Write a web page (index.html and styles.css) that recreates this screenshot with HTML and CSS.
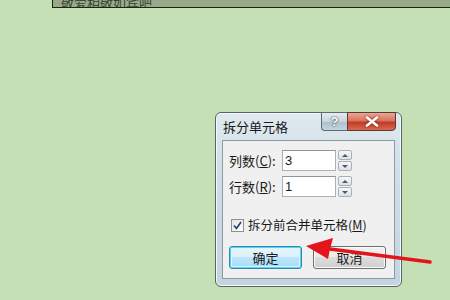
FILE: index.html
```html
<!DOCTYPE html>
<html>
<head>
<meta charset="utf-8">
<link rel="stylesheet" href="styles.css">
</head>
<body>
<div class="doc-strip"><span class="doc-text">敬爱相敬如宾吧</span></div>

<div class="dialog">
  <div class="titlebar">
    <span class="title">拆分单元格</span>
    <div class="caption-btns">
      <div class="cap-help">?</div>
      <div class="cap-close">
        <svg width="14" height="11" viewBox="0 0 14 11"><path d="M2 1.5 L12 9.5 M12 1.5 L2 9.5" stroke="#fff" stroke-width="2.6" stroke-linecap="round"/></svg>
      </div>
    </div>
  </div>
  <div class="client">
    <div class="field">
      <span class="lbl">列数(<u>C</u>):</span>
      <div class="num"><span class="val">3</span></div>
      <div class="spin"><div class="spin-up"><i class="tri up"></i></div><div class="spin-dn"><i class="tri dn"></i></div></div>
    </div>
    <div class="field">
      <span class="lbl">行数(<u>R</u>):</span>
      <div class="num"><span class="val">1</span></div>
      <div class="spin"><div class="spin-up"><i class="tri up"></i></div><div class="spin-dn"><i class="tri dn"></i></div></div>
    </div>
    <div class="check-row">
      <div class="checkbox">
        <svg width="9" height="9" viewBox="0 0 9 9"><path d="M1 4.5 L3.5 7.5 L8 1" fill="none" stroke="#2a3a6a" stroke-width="1.6"/></svg>
      </div>
      <span class="check-lbl">拆分前合并单元格(<u>M</u>)</span>
    </div>
    <div class="buttons">
      <div class="btn btn-default">确定</div>
      <div class="btn">取消</div>
    </div>
  </div>
</div>

<svg class="arrow" width="450" height="300" viewBox="0 0 450 300">
  <path d="M430 262 L330 249" stroke="#e3151a" stroke-width="3.5" stroke-linecap="round"/>
  <path d="M306 246 L333 238 L330 249 L328 259 Z" fill="#e3151a"/>
</svg>
</body>
</html>
```

FILE: styles.css
```css
html, body {
  margin: 0;
  padding: 0;
}
body {
  width: 450px;
  height: 300px;
  background: #c5e0b5;
  font-family: "Noto Sans CJK SC", "Liberation Sans", sans-serif;
  position: relative;
  overflow: hidden;
}
.doc-strip {
  margin-left: 52px;
  height: 7px;
  background: #97ab8a;
  border-left: 1px solid #1e241a;
  border-bottom: 1px solid #1e241a;
  overflow: hidden;
  display: flex;
  align-items: flex-end;
  padding-left: 8px;
}
.doc-text {
  font-size: 13px;
  line-height: 13px;
  color: #3a4236;
  margin-bottom: -2px;
}
.dialog {
  position: absolute;
  left: 215px;
  top: 112px;
  width: 185px;
  height: 173px;
  border: 1px solid #55636b;
  border-radius: 6px;
  background: linear-gradient(180deg, #dfe9ef 0%, #cfdde6 40%, #c4d4de 100%);
  box-shadow: inset 0 0 0 1px #f4f8fa;
  display: flex;
  flex-direction: column;
}
.titlebar {
  height: 27px;
  display: flex;
  justify-content: space-between;
  align-items: flex-start;
}
.title {
  font-size: 13px;
  color: #1a1a1a;
  margin: 6px 0 0 7px;
  line-height: 16px;
}
.caption-btns {
  display: flex;
  margin-right: 5px;
  margin-top: -1px;
}
.cap-help {
  width: 25px;
  height: 17px;
  border: 1px solid #5b6b76;
  border-right: none;
  border-bottom-left-radius: 4px;
  background: linear-gradient(180deg, #e6edf1 0%, #c6d3db 50%, #aebfca 51%, #c5d4dc 100%);
  color: #fff;
  font-family: "Liberation Sans", sans-serif;
  font-weight: bold;
  font-size: 13px;
  text-align: center;
  line-height: 17px;
  text-shadow: 0 0 2px #3c4a55, 0 0 1px #3c4a55;
}
.cap-close {
  width: 47px;
  height: 17px;
  border: 1px solid #5b3a36;
  border-bottom-right-radius: 4px;
  background: linear-gradient(180deg, #eba596 0%, #d9735f 45%, #c43b26 55%, #d86a52 100%);
  display: flex;
  align-items: center;
  justify-content: center;
}
.cap-close svg {
  filter: drop-shadow(0 0 1px #5a1a10);
}
.client {
  flex: 1;
  margin: 0 6px 7px 6px;
  background: #f0f0f0;
  border: 1px solid #8b9ba6;
  display: flex;
  flex-direction: column;
  padding: 9px 0 0 6px;
  font-size: 13px;
  color: #1a1a1a;
}
.field {
  display: flex;
  align-items: center;
  height: 21px;
  margin-bottom: 5px;
}
.lbl {
  width: 53px;
  line-height: 16px;
}
u {
  text-decoration: underline;
  text-underline-offset: 1px;
}
.num {
  width: 50px;
  height: 19px;
  border: 1px solid #a9b0b8;
  border-top-color: #8e959d;
  background: #fff;
  display: flex;
  align-items: center;
  padding-left: 2px;
  box-sizing: content-box;
}
.val {
  font-family: "Liberation Sans", sans-serif;
  font-size: 13px;
}
.spin {
  margin-left: 2px;
  width: 14px;
  height: 21px;
  display: flex;
  flex-direction: column;
  gap: 1px;
}
.spin-up, .spin-dn {
  flex: 1;
  border: 1px solid #a7b1bb;
  border-radius: 2px;
  background: linear-gradient(180deg, #f6f7f8, #dde1e5);
  display: flex;
  align-items: center;
  justify-content: center;
}
.tri {
  width: 0;
  height: 0;
  border-left: 3px solid transparent;
  border-right: 3px solid transparent;
}
.tri.up { border-bottom: 3px solid #4a5a70; }
.tri.dn { border-top: 3px solid #4a5a70; }
.check-row {
  display: flex;
  align-items: center;
  margin-top: 15px;
  margin-left: 2px;
  height: 16px;
}
.checkbox {
  width: 11px;
  height: 11px;
  border: 1px solid #8f8f8f;
  background: linear-gradient(135deg, #dfe3e8, #ffffff);
  display: flex;
  align-items: center;
  justify-content: center;
  margin-right: 4px;
}
.check-lbl {
  font-size: 12.5px;
  line-height: 16px;
}
.buttons {
  display: flex;
  gap: 11px;
  margin-top: 13px;
}
.btn {
  width: 71px;
  height: 21px;
  border: 1px solid #707070;
  border-radius: 3px;
  background: linear-gradient(180deg, #f2f2f2 0%, #ebebeb 45%, #dddddd 50%, #cfcfcf 100%);
  display: flex;
  align-items: center;
  justify-content: center;
  font-size: 13px;
  line-height: 16px;
  box-shadow: inset 0 0 0 1px #fafafa;
}
.btn-default {
  border-color: #3c7fb1;
  box-shadow: inset 0 0 0 1px #48dbf4, inset 0 0 0 2px #dcf4fb;
  background: linear-gradient(180deg, #eaf6fd 0%, #d9f0fc 45%, #bee6fd 50%, #a7d9f5 100%);
}
.arrow {
  position: absolute;
  left: 0;
  top: 0;
  pointer-events: none;
}
```
